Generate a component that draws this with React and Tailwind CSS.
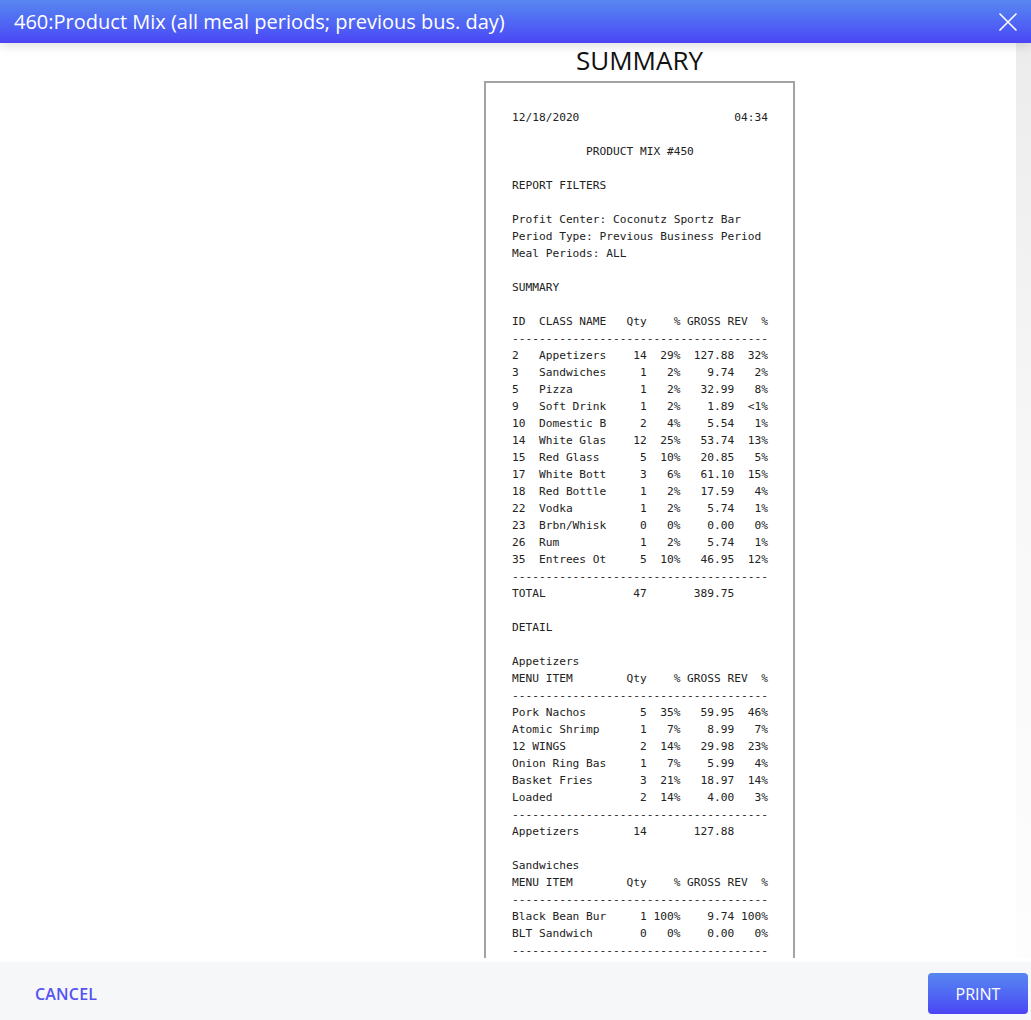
import React from "react";

const COL = (s, n) => String(s).padEnd(n);
const R = (s, n) => String(s).padStart(n);

const DASHES = "-".repeat(38);

const classRows = [
    ["2", "Appetizers", "14", "29%", "127.88", "32%"],
    ["3", "Sandwiches", "1", "2%", "9.74", "2%"],
    ["5", "Pizza", "1", "2%", "32.99", "8%"],
    ["9", "Soft Drink", "1", "2%", "1.89", "<1%"],
    ["10", "Domestic B", "2", "4%", "5.54", "1%"],
    ["14", "White Glas", "12", "25%", "53.74", "13%"],
    ["15", "Red Glass", "5", "10%", "20.85", "5%"],
    ["17", "White Bott", "3", "6%", "61.10", "15%"],
    ["18", "Red Bottle", "1", "2%", "17.59", "4%"],
    ["22", "Vodka", "1", "2%", "5.74", "1%"],
    ["23", "Brbn/Whisk", "0", "0%", "0.00", "0%"],
    ["26", "Rum", "1", "2%", "5.74", "1%"],
    ["35", "Entrees Ot", "5", "10%", "46.95", "12%"],
];

const appetizers = [
    ["Pork Nachos", "5", "35%", "59.95", "46%"],
    ["Atomic Shrimp", "1", "7%", "8.99", "7%"],
    ["12 WINGS", "2", "14%", "29.98", "23%"],
    ["Onion Ring Bas", "1", "7%", "5.99", "4%"],
    ["Basket Fries", "3", "21%", "18.97", "14%"],
    ["Loaded", "2", "14%", "4.00", "3%"],
];

const sandwiches = [
    ["Black Bean Bur", "1", "100%", "9.74", "100%"],
    ["BLT Sandwich", "0", "0%", "0.00", "0%"],
];

// qty ends at col 20, pct at 25, revenue at 33, rev pct at 38
const figures = (qty, pct, rev, revPct) => R(qty, 6) + R(pct, 5) + R(rev, 8) + R(revPct, 5);
const classRow = ([id, name, ...rest]) => COL(id, 4) + COL(name, 10) + figures(...rest);
const itemRow = ([name, ...rest]) => COL(name, 14) + figures(...rest);
const subtotal = (label, qty, rev) => COL(label, 14) + R(qty, 6) + R("", 5) + R(rev, 8);
const itemHeader = COL("MENU ITEM", 17) + "Qty    % GROSS REV  %";

const reportLines = [
    "12/18/2020" + R("04:34", 28),
    "",
    R("", 11) + "PRODUCT MIX #450",
    "",
    "REPORT FILTERS",
    "",
    "Profit Center: Coconutz Sportz Bar",
    "Period Type: Previous Business Period",
    "Meal Periods: ALL",
    "",
    "SUMMARY",
    "",
    "ID  CLASS NAME   Qty    % GROSS REV  %",
    DASHES,
    ...classRows.map(classRow),
    DASHES,
    subtotal("TOTAL", "47", "389.75"),
    "",
    "DETAIL",
    "",
    "Appetizers",
    itemHeader,
    DASHES,
    ...appetizers.map(itemRow),
    DASHES,
    subtotal("Appetizers", "14", "127.88"),
    "",
    "Sandwiches",
    itemHeader,
    DASHES,
    ...sandwiches.map(itemRow),
    DASHES,
    subtotal("Sandwiches", "1", "9.74"),
];

const App = () => {
    return (
        <div className="flex h-[1020px] w-full flex-col overflow-hidden bg-white" style={{ fontFamily: '"Open Sans", "Noto Sans", sans-serif' }}>
            <div className="relative z-10 flex h-[43px] shrink-0 items-center justify-between bg-gradient-to-b from-[#5886f0] to-[#4b44f5] pl-[14px] pr-[12px] shadow-[0_3px_10px_rgba(0,0,0,0.13)]">
                <h1 className="text-[20px] leading-none text-white">460:Product Mix (all meal periods; previous bus. day)</h1>
                <button className="flex h-[22px] w-[22px] items-center justify-center text-white">
                    <svg width="20" height="20" viewBox="0 0 20 20" fill="none" stroke="currentColor" strokeWidth="1.6">
                        <path d="M1.5 1.5L18.5 18.5M18.5 1.5L1.5 18.5" />
                    </svg>
                </button>
            </div>

            <div className="flex h-[915px] shrink-0">
                <div className="flex-1 overflow-hidden">
                    <div className="ml-[484px] flex w-[311px] flex-col">
                        <h2 className="text-center text-[26px] leading-[34px] text-[#111]">SUMMARY</h2>
                        <div className="mt-[4px] border-2 border-b-0 border-[#a3a3a3] bg-white pl-[26px] pt-[26px]">
                            <pre className="text-[11.2px] leading-[17px] text-[#222]" style={{ fontFamily: '"DejaVu Sans Mono", "Liberation Mono", monospace' }}>
                                {reportLines.join("\n")}
                            </pre>
                        </div>
                    </div>
                </div>
                <div className="w-[15px] bg-gradient-to-b from-[#ececec] via-[#f8f8f8] to-[#fdfdfd]" />
            </div>

            <div className="h-[4px] shrink-0 bg-white" />

            <div className="flex h-[58px] shrink-0 items-center justify-between bg-[#f6f7f9] pl-[35px] pr-[3px] pt-[5px]">
                <button className="text-[16px] font-semibold tracking-[0.2px] text-[#5452f2]">CANCEL</button>
                <button className="flex h-[41px] w-[100px] items-center justify-center rounded-[4px] bg-gradient-to-b from-[#5886f0] to-[#4b44f5] text-[16px] text-white">
                    PRINT
                </button>
            </div>
        </div>
    );
};

export default App;
